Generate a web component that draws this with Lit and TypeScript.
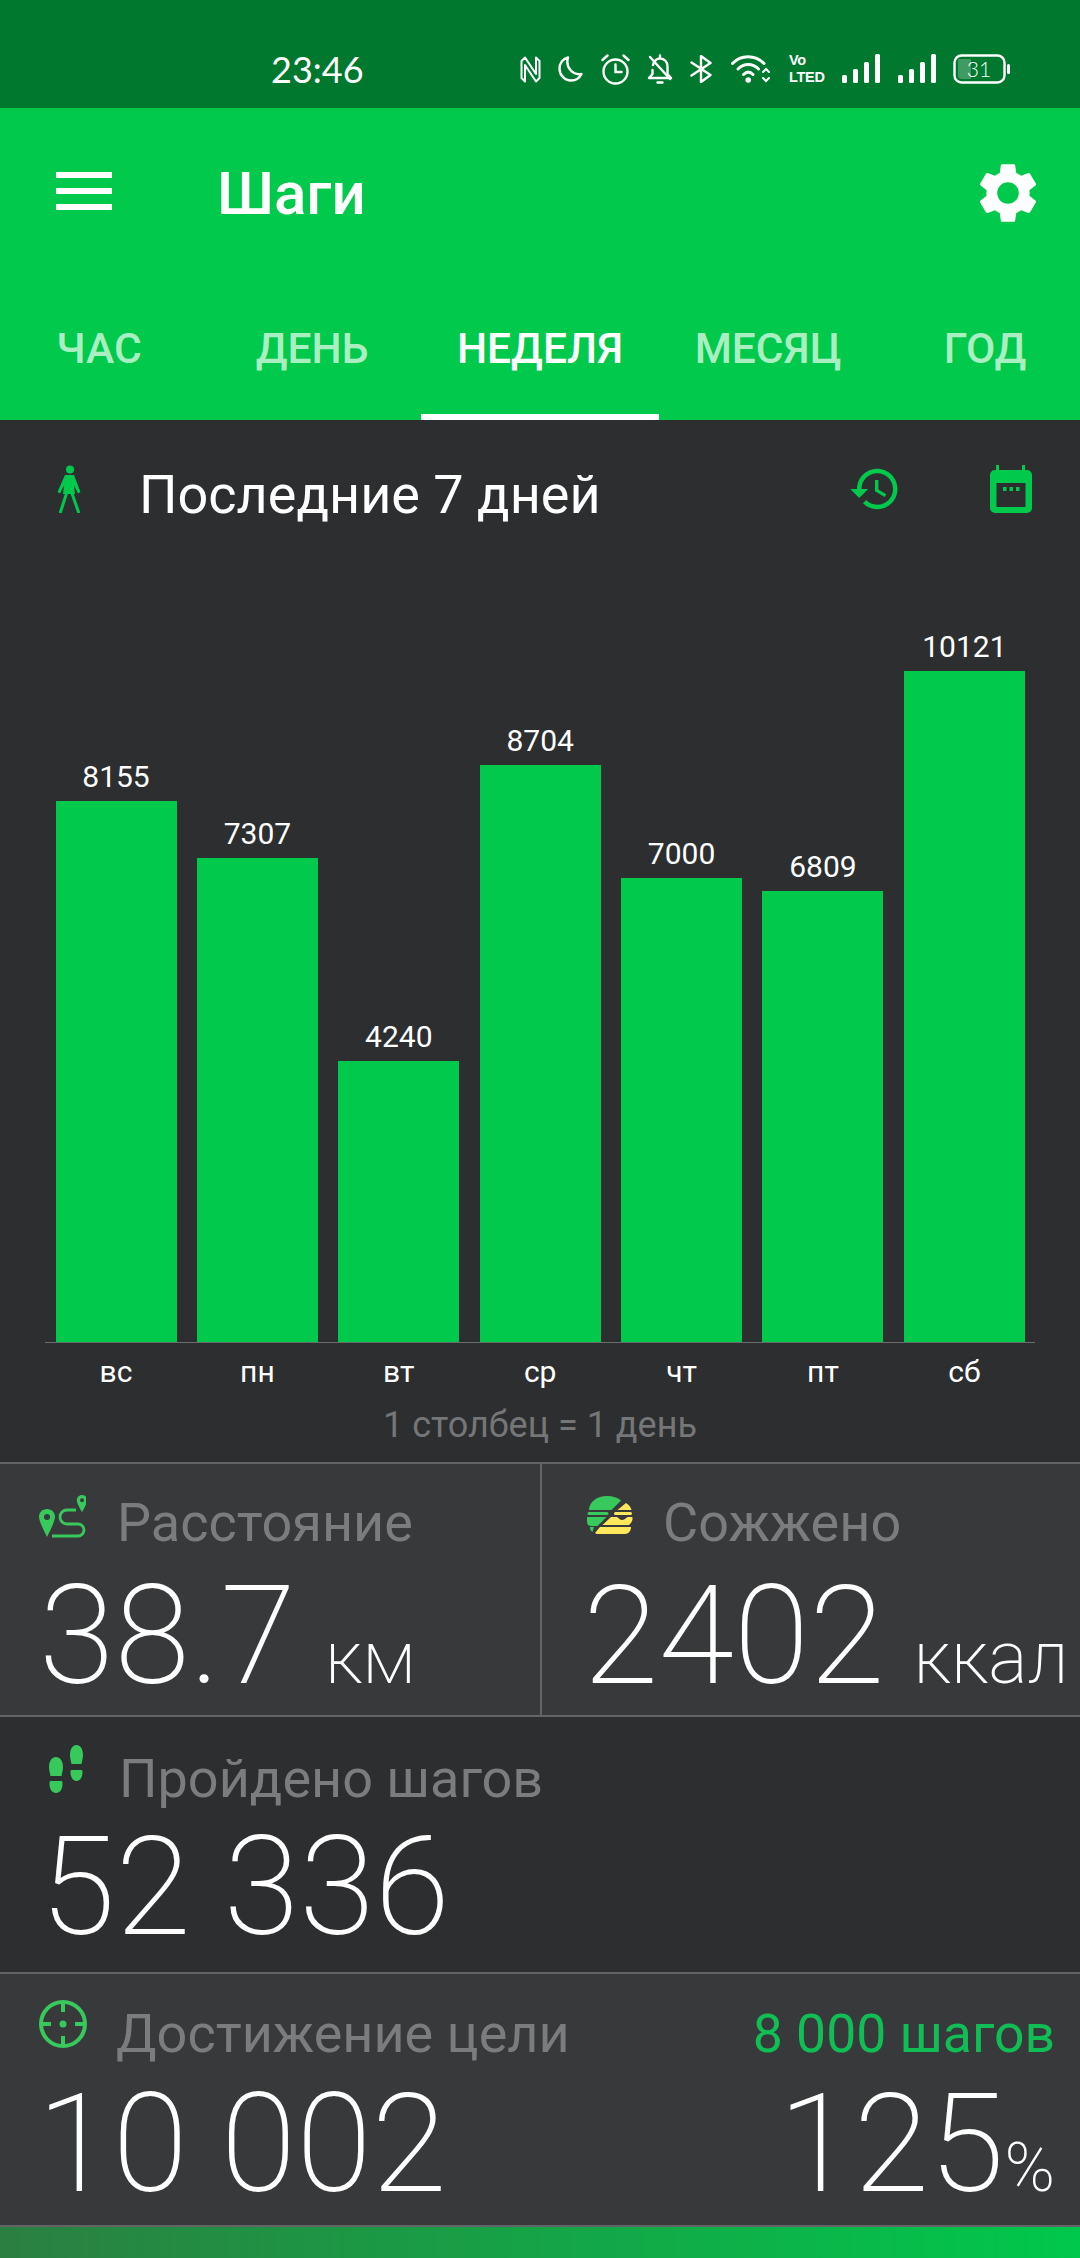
import { LitElement, html, css } from 'lit';
import { customElement } from 'lit/decorators.js';

const BAR_SCALE = 0.0663;

const BARS = [
  { day: 'вс', steps: 8155 },
  { day: 'пн', steps: 7307 },
  { day: 'вт', steps: 4240 },
  { day: 'ср', steps: 8704 },
  { day: 'чт', steps: 7000 },
  { day: 'пт', steps: 6809 },
  { day: 'сб', steps: 10121 },
];

const TABS = ['ЧАС', 'ДЕНЬ', 'НЕДЕЛЯ', 'МЕСЯЦ', 'ГОД'];

const GREEN = '#38c95c';

const settingsPath =
  'M19.14 12.94c.04-.3.06-.61.06-.94 0-.32-.02-.64-.07-.94l2.03-1.58c.18-.14.23-.41.12-.61l-1.92-3.32c-.12-.22-.37-.29-.59-.22l-2.39.96c-.5-.38-1.03-.7-1.62-.94l-.36-2.54c-.04-.24-.24-.41-.48-.41h-3.84c-.24 0-.43.17-.47.41l-.36 2.54c-.59.24-1.13.57-1.62.94l-2.39-.96c-.22-.08-.47 0-.59.22L2.74 8.87c-.12.21-.08.47.12.61l2.03 1.58c-.05.3-.09.63-.09.94s.02.64.07.94l-2.03 1.58c-.18.14-.23.41-.12.61l1.92 3.32c.12.22.37.29.59.22l2.39-.96c.5.38 1.03.7 1.62.94l.36 2.54c.05.24.24.41.48.41h3.84c.24 0 .44-.17.47-.41l.36-2.54c.59-.24 1.13-.56 1.62-.94l2.39.96c.22.08.47 0 .59-.22l1.92-3.32c.12-.22.07-.47-.12-.61l-2.01-1.58zM12 15.6c-1.98 0-3.6-1.62-3.6-3.6s1.62-3.6 3.6-3.6 3.6 1.62 3.6 3.6-1.62 3.6-3.6 3.6z';

const historyPath =
  'M13 3c-4.97 0-9 4.03-9 9H1l3.89 3.89.07.14L9 12H6c0-3.87 3.13-7 7-7s7 3.13 7 7-3.13 7-7 7c-1.93 0-3.68-.79-4.94-2.06l-1.42 1.42C8.27 19.99 10.51 21 13 21c4.97 0 9-4.03 9-9s-4.03-9-9-9zm-1 5v5l4.28 2.54.72-1.21-3.5-2.08V8H12z';

const signalIcon = html`<svg width="38" height="30" viewBox="0 0 38 30" fill="#fff">
  <rect x="0" y="21" width="5" height="8" rx="1.5" />
  <rect x="11" y="15" width="5" height="14" rx="1.5" />
  <rect x="22" y="8" width="5" height="21" rx="1.5" />
  <rect x="33" y="0" width="5" height="29" rx="1.5" />
</svg>`;

@customElement('app-root')
export class AppRoot extends LitElement {
  static styles = css`
    :host {
      display: block;
      width: 1080px;
      height: 2258px;
      overflow: hidden;
      background: #2d2e30;
      font-family: Roboto, 'Noto Sans', sans-serif;
      color: #fff;
    }
    svg {
      display: block;
      flex: none;
    }
    .status {
      height: 108px;
      box-sizing: border-box;
      background: #00792f;
      display: flex;
      align-items: center;
      padding: 30px 0 0 271px;
    }
    .time {
      width: 249px;
      font-family: Lato, sans-serif;
      font-size: 36px;
      font-weight: 400;
    }
    .status-icons {
      width: 490px;
      display: flex;
      justify-content: space-between;
      align-items: center;
    }
    .volte {
      width: 36px;
      font-family: 'Liberation Sans', sans-serif;
      font-weight: 700;
      font-size: 14.5px;
      line-height: 17px;
      letter-spacing: -0.3px;
      white-space: nowrap;
    }
    .battery {
      width: 57px;
      height: 30px;
      position: relative;
    }
    .battery span {
      position: absolute;
      left: 0;
      width: 52px;
      top: 0;
      line-height: 30px;
      text-align: center;
      font-family: Lato, sans-serif;
      font-size: 21px;
      font-weight: 300;
    }
    .appbar {
      height: 312px;
      background: #00c94c;
    }
    .toolbar {
      height: 200px;
      box-sizing: border-box;
      padding: 64px 36px 0 56px;
      display: flex;
      align-items: flex-start;
    }
    .burger {
      width: 56px;
      display: flex;
      flex-direction: column;
      gap: 10px;
    }
    .burger i {
      display: block;
      height: 6px;
      background: #fff;
    }
    .title {
      margin-left: 105px;
      font-size: 60px;
      font-weight: 500;
      line-height: 60px;
      flex: 1;
      margin-top: -8px;
    }
    .gear {
      margin-top: -15px;
    }
    .tabs {
      height: 112px;
      display: grid;
      grid-template-columns: 198px 223px 238px 218px 203px;
    }
    .tab {
      height: 112px;
      box-sizing: border-box;
      padding-top: 16px;
      line-height: 50px;
      text-align: center;
      font-size: 42.5px;
      font-weight: 500;
      color: #a9efc1;
    }
    .tab.active {
      color: #fff;
      border-bottom: 6px solid #fff;
    }
    .tab.day {
      padding-left: 5px;
    }
    .tab.year {
      padding-left: 13px;
    }
    .range {
      height: 118px;
      box-sizing: border-box;
      display: flex;
      align-items: center;
      padding-top: 20px;
      padding-left: 56px;
    }
    .range-title {
      margin-left: 57px;
      width: 709px;
      font-size: 54px;
      line-height: 60px;
      position: relative;
      top: 6px;
    }
    .range-cal {
      margin-left: 88px;
    }
    .chart {
      height: 804px;
      box-sizing: border-box;
      padding: 0 55.5px;
      display: flex;
      gap: 20.4px;
      align-items: flex-end;
    }
    .col {
      width: 121px;
      flex: none;
      text-align: center;
    }
    .col span {
      display: block;
      font-size: 30px;
      line-height: 36px;
      margin-bottom: 6.5px;
    }
    .col i {
      display: block;
      background: #00c94c;
    }
    .axis {
      height: 1px;
      margin: 0 45px;
      background: #6a6b6d;
    }
    .days {
      display: flex;
      gap: 20.4px;
      padding: 9px 55.5px 0;
    }
    .days span {
      width: 121px;
      flex: none;
      text-align: center;
      font-size: 30px;
      line-height: 40px;
    }
    .note {
      height: 70px;
      padding-top: 13px;
      box-sizing: border-box;
      text-align: center;
      font-size: 36px;
      line-height: 40px;
      color: #757677;
    }
    .panel {
      box-sizing: border-box;
      border-top: 2px solid #636466;
    }
    .light {
      background: #38393b;
    }
    .split {
      height: 253px;
      display: flex;
    }
    .cell {
      box-sizing: border-box;
      min-width: 0;
    }
    .cell + .cell {
      border-left: 2px solid #636466;
    }
    .head {
      display: flex;
      align-items: flex-start;
      height: 66px;
    }
    .label {
      font-size: 54px;
      line-height: 60px;
      color: #7b7c7d;
    }
    .goal {
      margin-left: auto;
      font-size: 53.5px;
      line-height: 60px;
      color: #10be55;
    }
    .value {
      display: flex;
      align-items: baseline;
      font-weight: 220;
      font-size: 137px;
      line-height: 130px;
      white-space: nowrap;
    }
    .unit {
      font-size: 74px;
      line-height: 72px;
      margin-left: 29px;
    }
    .pct {
      font-size: 68px;
      line-height: 68px;
    }
    .dist {
      width: 540px;
      flex: none;
      padding: 28px 0 0 36px;
    }
    .kcal {
      flex: 1;
      padding: 32px 0 0 45px;
    }
    .dist .label {
      margin-left: 31px;
      margin-top: 1px;
    }
    .kcal .label {
      margin-left: 29px;
      margin-top: -3px;
    }
    .dist .value {
      margin: 13px 0 0 3px;
    }
    .kcal .value {
      margin: 9px 0 0 -4px;
    }
    .steps {
      height: 257px;
      padding: 28px 0 0 49px;
    }
    .steps .label {
      margin-left: 36px;
      margin-top: 4px;
    }
    .steps .value {
      margin: 11px 0 0 -9px;
    }
    .goal-row {
      height: 253px;
      padding: 26px 25px 0 39px;
    }
    .goal-row .label {
      margin-left: 29px;
      margin-top: 4px;
    }
    .goal-row .goal {
      margin-top: 4px;
    }
    .goal-row .value {
      margin: 13px 0 0 -2px;
      justify-content: space-between;
    }
    .goal-row .pct-value {
      display: flex;
      align-items: baseline;
    }
    .footer {
      height: 33px;
      box-sizing: border-box;
      border-top: 2px solid #636466;
      background: linear-gradient(90deg, #2b7f41, #00c84c);
    }
  `;

  private statusIcons() {
    return html`
      <svg width="21" height="27" viewBox="0 0 21 27" fill="none" stroke="#fff" stroke-width="2" stroke-linejoin="round">
        <path d="M5 1.500 1.500 5v17L5 25.500V9l11 16.500 3.500-3.500V5L16 1.500V18z" />
      </svg>
      <svg width="25" height="26" viewBox="0 0 25 26" fill="none" stroke="#fff" stroke-width="2.4" stroke-linejoin="round">
        <path d="M10 1.500C4.500 3 1.500 7.500 1.500 12.500 1.500 19 6.500 24.500 13 24.500c4.500 0 8.500-2.500 10.500-6.500C15.500 19.500 7 12 10 1.500z" />
      </svg>
      <svg width="29" height="31" viewBox="0 0 29 31" fill="none" stroke="#fff" stroke-width="2.4" stroke-linecap="round">
        <circle cx="14.500" cy="17.500" r="12" />
        <path d="M14.500 10.500v7.500h6M1.500 6l5-4.500M27.500 6l-5-4.500" />
      </svg>
      <svg width="26" height="30" viewBox="0 0 26 30" fill="none" stroke="#fff" stroke-width="2.400" stroke-linejoin="round" stroke-linecap="round">
        <path d="M13 1.500v3M6 11c1-4 4-6.500 7-6.500 4.500 0 7.500 3.500 7.500 8V20l3.500 4H9" />
        <path d="M5.500 16v4l-3.500 4h6M3 3l20 22M10.500 28.500h5" />
      </svg>
      <svg width="23" height="28" viewBox="0 0 23 28" fill="none" stroke="#fff" stroke-width="2.400" stroke-linejoin="round" stroke-linecap="round">
        <path d="M1.500 7.500 20.500 20 11 27V1l9.500 7L1.500 20.500" />
      </svg>
      <svg width="41" height="30" viewBox="0 0 41 30" fill="none" stroke="#fff" stroke-width="3" stroke-linecap="round">
        <path d="M1.500 9.500C10 .5 24 .5 33 9.500" />
        <path d="M7 15c6-6 14.500-6 20.500 0" />
        <path d="M12.500 20.500c3-3 6.500-3 9.500 0" />
        <circle cx="17.200" cy="26" r="2.800" fill="#fff" stroke="none" />
        <path d="M32 18l3-3 3 3M32 24l3 3 3-3" stroke-width="2" fill="none" />
      </svg>
      <div class="volte">Vo<br />LTED</div>
      ${signalIcon} ${signalIcon}
      <div class="battery">
        <svg width="57" height="30" viewBox="0 0 57 30">
          <rect x="1.500" y="1.500" width="50" height="27" rx="7" fill="none" stroke="#fff" stroke-width="2.400" />
          <path d="M5 5h13v20H9a4 4 0 0 1-4-4z" fill="#fff" fill-opacity=".25" />
          <rect x="54" y="10" width="3" height="10" rx="1.500" fill="#fff" />
        </svg>
        <span>31</span>
      </div>
    `;
  }

  private walkIcon() {
    return html`<svg width="26" height="48" viewBox="0 0 26 48" fill="#00c94c" stroke="none">
      <circle cx="14" cy="4.500" r="4" />
      <path d="M9 10h9l6.500 17-2.500 1.500-4-8 1 8.500H7l1-8.500-4 8L1.500 27z" />
      <path d="M11 27 4.500 47M15.500 27 22.500 47" fill="none" stroke="#00c94c" stroke-width="3" stroke-linecap="round" />
    </svg>`;
  }

  private calendarIcon() {
    return html`<svg width="42" height="48" viewBox="0 0 42 48" fill="#00c94c" fill-rule="evenodd">
      <rect x="6" y="0" width="3" height="6" />
      <rect x="32" y="0" width="3" height="6" />
      <path d="M5 5h32a5 5 0 0 1 5 5v33a5 5 0 0 1-5 5H5a5 5 0 0 1-5-5V10a5 5 0 0 1 5-5zM6.500 18v24h29V18z" />
      <rect x="13" y="22" width="3.500" height="4" />
      <rect x="19.500" y="22" width="3.500" height="4" />
      <rect x="26" y="22" width="3.500" height="4" />
    </svg>`;
  }

  private routeIcon() {
    return html`<svg width="50" height="47" viewBox="16 12 50 47" fill="${GREEN}" fill-rule="evenodd">
      <path d="M27 29c4.800 0 8 3.600 8 7.800 0 4-4 12-8 20.200-4-8.200-8-16.200-8-20.200 0-4.200 3.200-7.800 8-7.800zm0 5a3 3 0 1 0 0 6 3 3 0 0 0 0-6z" />
      <path d="M62 15c3 0 5.200 2.400 5.200 5.200 0 2.600-2.600 7.400-5.200 12-2.600-4.600-5.200-9.400-5.200-12 0-2.800 2.200-5.200 5.200-5.200zm0 3.200a2 2 0 1 0 0 4 2 2 0 0 0 0-4z" />
      <path d="M56 30H47a7 7 0 0 0 0 14h11a6 6 0 0 1 0 12H32" fill="none" stroke="${GREEN}" stroke-width="2.800" />
    </svg>`;
  }

  private burgerIcon() {
    return html`<svg width="47" height="39" viewBox="16 16 47 39">
      <g fill="${GREEN}">
        <path d="M18 30c0-8 8-14 18-14 6 0 10.500 1.500 14 4.500L40.500 30z" />
        <rect x="16.500" y="32" width="21" height="3" rx="1.500" />
        <path d="M16 37h19.500l-9 9H20c-2.500 0-4-1.500-4-4.500z" />
        <path d="M19 47h4l-1.500 5c-2-1-2.500-3-2.500-5z" />
      </g>
      <g fill="#ffe75c">
        <path d="M55 23c3 2 5 4.500 5.500 7H46.500z" />
        <rect x="43" y="32" width="18" height="3" rx="1.500" />
        <path d="M40 37h6c2 1.500 3 3 5 3s4-2 5.500-3H61c1 0 1 5-3 8H31.500z" />
        <path d="M29 47h31c0 4-2.500 7-6 7H27c-1.500 0-2.500-.5-3-1z" />
      </g>
    </svg>`;
  }

  private shoesIcon() {
    return html`<svg width="34" height="48" viewBox="0 0 34 48" fill="${GREEN}">
      <path d="M7 12c4 0 7 4 7 10 0 3-.800 5.500-1.500 9h-11C.800 27.500 0 25 0 22c0-6 3-10 7-10z" />
      <path d="M1 36h12c.300 1 .500 2 .500 3 0 5-2.500 9-6.500 9S.500 44 .500 39c0-1 .200-2 .500-3z" />
      <path d="M27.500 0C31.300 0 34 3.800 34 10c0 3-.800 5.500-1.500 9h-10C21.800 15.500 21 13 21 10 21 3.800 23.700 0 27.500 0z" />
      <path d="M22 25h11c.400 1 .500 1.800.500 2.500 0 4.500-2.500 8.500-6 8.500s-6-4-6-8.500c0-.700.100-1.500.500-2.500z" />
    </svg>`;
  }

  private targetIcon() {
    return html`<svg width="48" height="48" viewBox="0 0 48 48" fill="none" stroke="${GREEN}" stroke-width="4">
      <circle cx="24" cy="24" r="22" />
      <path d="M24 2v10M24 36v10M2 24h10M36 24h10" />
      <circle cx="24" cy="24" r="3.500" fill="${GREEN}" stroke="none" />
    </svg>`;
  }

  render() {
    return html`
      <div class="status">
        <div class="time">23:46</div>
        <div class="status-icons">${this.statusIcons()}</div>
      </div>

      <div class="appbar">
        <div class="toolbar">
          <div class="burger"><i></i><i></i><i></i></div>
          <div class="title">Шаги</div>
          <svg class="gear" width="72" height="72" viewBox="0 0 24 24" fill="#fff"><path d="${settingsPath}" /></svg>
        </div>
        <div class="tabs">
          ${TABS.map(
            (t, i) => html`<div class="tab ${i === 2 ? 'active' : ''} ${i === 1 ? 'day' : ''} ${i === 4 ? 'year' : ''}">${t}</div>`
          )}
        </div>
      </div>

      <div class="range">
        ${this.walkIcon()}
        <div class="range-title">Последние 7 дней</div>
        <svg width="54" height="54" viewBox="0 0 24 24" fill="#00c94c"><path d="${historyPath}" /></svg>
        <div class="range-cal">${this.calendarIcon()}</div>
      </div>

      <div class="chart">
        ${BARS.map(
          b => html`<div class="col">
            <span>${b.steps}</span>
            <i style="height:${Math.round(b.steps * BAR_SCALE)}px"></i>
          </div>`
        )}
      </div>
      <div class="axis"></div>
      <div class="days">${BARS.map(b => html`<span>${b.day}</span>`)}</div>
      <div class="note">1 столбец = 1 день</div>

      <div class="panel light split">
        <div class="cell dist">
          <div class="head">${this.routeIcon()}<div class="label">Расстояние</div></div>
          <div class="value">38.7<span class="unit">км</span></div>
        </div>
        <div class="cell kcal">
          <div class="head">${this.burgerIcon()}<div class="label">Сожжено</div></div>
          <div class="value">2402<span class="unit">ккал</span></div>
        </div>
      </div>

      <div class="panel steps">
        <div class="head">${this.shoesIcon()}<div class="label">Пройдено шагов</div></div>
        <div class="value">52 336</div>
      </div>

      <div class="panel light goal-row">
        <div class="head">
          ${this.targetIcon()}
          <div class="label">Достижение цели</div>
          <div class="goal">8 000 шагов</div>
        </div>
        <div class="value">
          <span>10 002</span>
          <span class="pct-value">125<span class="pct">%</span></span>
        </div>
      </div>

      <div class="footer"></div>
    `;
  }
}
